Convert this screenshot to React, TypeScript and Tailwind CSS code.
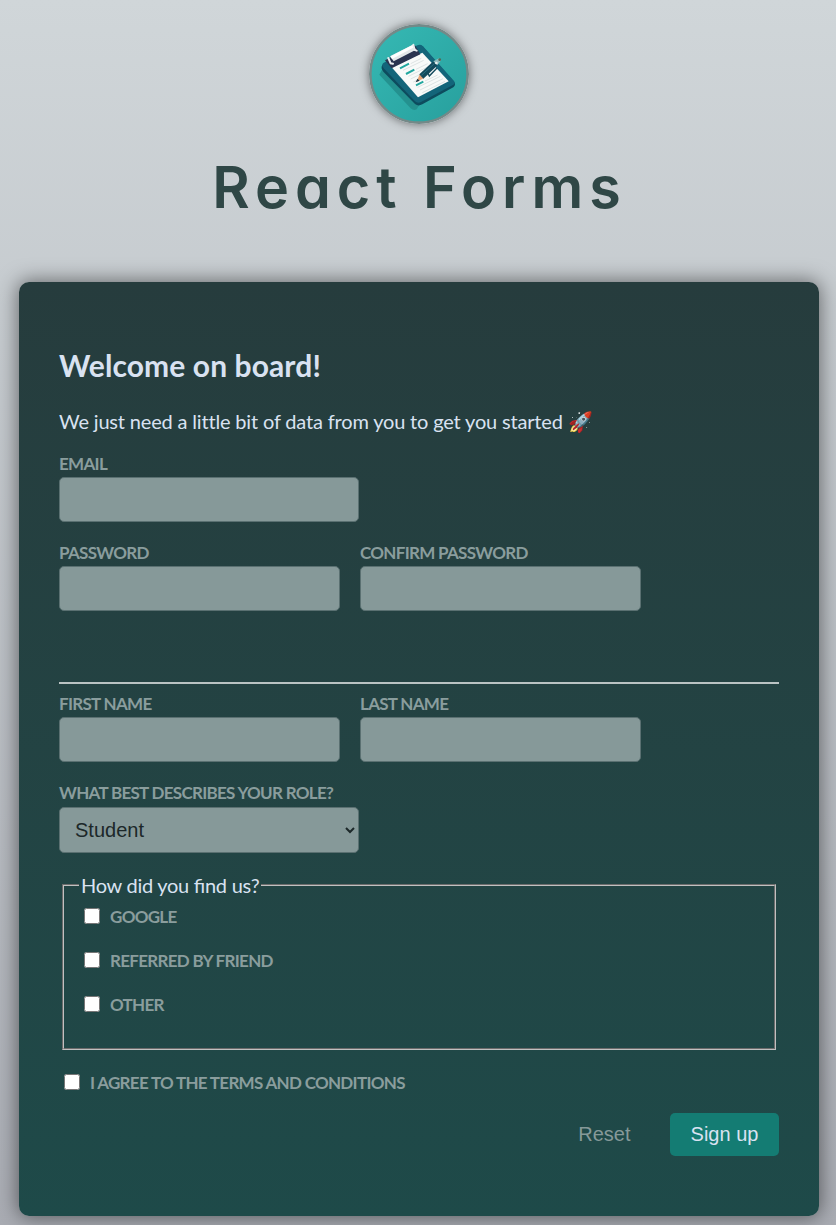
import type { ReactNode } from 'react';

const control =
  'block w-full rounded-[5px] border border-[#5a7071] bg-[#869999] text-[#1c2829]';

function Logo() {
  return (
    <svg viewBox="27 30 300 300" className="size-[100px] rounded-full shadow-[0_0_10px_rgba(0,0,0,0.5)]">
      <defs>
        <linearGradient id="disc" x1="0" y1="0" x2="1" y2="1">
          <stop offset="0" stopColor="#36b9b4" />
          <stop offset="1" stopColor="#279f9d" />
        </linearGradient>
      </defs>
      <circle cx="177" cy="180" r="146" fill="url(#disc)" stroke="#748988" strokeWidth="8" />
      <path d="M58 182 L70 160 L185 262 L170 286 Q161 291 152 283 Z" fill="#24918f" />
      <path
        d="M67 153 L172 97 Q181 91 189 98 L282 203 Q289 212 280 220 L187 271 Q175 278 165 270 L70 173 Q61 162 67 153Z"
        fill="#0d4c5e"
      />
      <path
        d="M70 147 L172 94 Q181 90 189 97 L282 201 Q287 207 280 212 L183 264 Q173 269 165 262 L71 163 Q63 153 70 147Z"
        fill="#13657a"
      />
      <path d="M95 160 L187 116 L266 202 L174 250Z" fill="#f8faf9" />
      <path d="M75 139 L165 94 L181 121 L95 163Z" fill="#2b3450" />
      <path d="M90 127 L158 92 L168 107 L101 142Z" fill="#e4e8ea" />
      <path d="M92 127 L158 93 L162 100 L96 135Z" fill="#fff" />
      <path d="M85 132 L92 148 L99 149 M160 92 L164 108 L170 110" fill="none" stroke="#e9ecee" strokeWidth="6" strokeLinecap="round" />
      <path d="M120 163 L147 149 M138 180 L163 167 M168 214 L190 203" stroke="#22a79f" strokeWidth="6" />
      <path
        d="M152 149 L184 133 M129 169 L191 139 M168 166 L203 149 M145 187 L207 157 M152 195 L212 166 M160 204 L220 175 M195 201 L233 183 M173 220 L241 187 M180 228 L249 194 M187 236 L255 202"
        stroke="#dde3e3"
        strokeWidth="3"
      />
      <path d="M169 204 L180 179 L193 192Z" fill="#e9a577" />
      <path d="M167 205 L172 194 L179 200Z" fill="#203443" />
      <path d="M178 181 L220 142 L233 154 L190 194Z" fill="#144a5c" />
      <path d="M220 142 L237 133 L243 139 L232 154Z" fill="#8fbabd" />
      <path d="M184 184 L224 148" stroke="#286e80" strokeWidth="3" />
      <path d="M202 174 L208 186 L231 162" fill="none" stroke="#144a5c" strokeWidth="4" />
      <circle cx="229" cy="147" r="4" fill="#e9efee" />
      <circle cx="239" cy="137" r="4" fill="#526552" />
    </svg>
  );
}

function Label({ children, htmlFor }: { children: ReactNode; htmlFor: string }) {
  return (
    <label
      htmlFor={htmlFor}
      className="block h-[20px] text-[17px] leading-[22px] font-bold tracking-[-0.7px] whitespace-nowrap text-[#8a9d9d] uppercase"
    >
      {children}
    </label>
  );
}

function Field({ id, label, type = 'text', className }: { id: string; label: string; type?: string; className: string }) {
  return (
    <div className={className}>
      <Label htmlFor={id}>{label}</Label>
      <input id={id} type={type} className={`${control} mt-[4px] h-[45px] px-4 text-[20px]`} />
    </div>
  );
}

function Check({ id, label }: { id: string; label: string }) {
  return (
    <div className="flex h-5 items-center gap-[10px]">
      <input id={id} type="checkbox" className="size-4" />
      <Label htmlFor={id}>{label}</Label>
    </div>
  );
}

export default function App() {
  return (
    <div className="h-[1225px] overflow-hidden bg-linear-to-b from-[#d0d6d9] to-[#a9acb3] pr-[17px] pl-[19px] font-['Lato',sans-serif] text-[#d9e2f1]">
      <header className="flex h-[282px] flex-col items-center pt-[24px]">
        <Logo />
        <h1 className="mt-[27px] pl-[1px] font-['Inter',sans-serif] text-[57.5px] leading-[72px] font-semibold tracking-[6px] whitespace-nowrap text-[#2f4746] [font-feature-settings:'cv11'_1]">
          React Forms
        </h1>
      </header>

      <form
        onSubmit={(e) => e.preventDefault()}
        className="h-[934px] rounded-[10px] bg-linear-to-b from-[#263c3d] to-[#1e4a49] px-[40px] pt-[63px] shadow-[0_0_20px_1px_rgba(0,0,0,0.5)]"
      >
        <h2 className="text-[30px] leading-[40px] font-bold tracking-[0.1px]">Welcome on board!</h2>
        <p className="mt-[22px] text-[20px] leading-[28px] tracking-[-0.17px]">
          We just need a little bit of data from you to get you started 🚀
        </p>

        <Field id="email" label="Email" type="email" className="mt-[18px] w-[300px]" />
        <div className="mt-[20px] flex gap-[20px]">
          <Field id="password" label="Password" type="password" className="w-[281px]" />
          <Field id="confirm-password" label="Confirm Password" type="password" className="w-[281px]" />
        </div>

        <hr className="mt-[71px] border-t-2 border-[#bac3c3]" />

        <div className="mt-[9px] flex gap-[20px]">
          <Field id="first-name" label="First Name" className="w-[281px]" />
          <Field id="last-name" label="Last Name" className="w-[281px]" />
        </div>

        <div className="mt-[20px] w-[300px]">
          <Label htmlFor="role">What best describes your role?</Label>
          <select
            id="role"
            className={`${control} mt-[5px] h-[46px] pl-[11px] font-['Liberation_Sans',sans-serif] text-[20px]`}
          >
            <option>Student</option>
            <option>Teacher</option>
            <option>Employee</option>
            <option>Founder</option>
            <option>Other</option>
          </select>
        </div>

        <fieldset className="mx-[3px] mt-[19px] h-[178px] border-2 border-[#c0c0c0] [border-style:groove] px-[15px]">
          <legend className="px-[2px] text-[20px] leading-[26px] tracking-[-0.27px] [font-feature-settings:'liga'_1]">
            How did you find us?
          </legend>
          <div className="flex flex-col gap-[24px] pt-[8px] pl-[5px]">
            <Check id="google" label="Google" />
            <Check id="friend" label="Referred by friend" />
            <Check id="other" label="Other" />
          </div>
        </fieldset>

        <div className="mt-[22px] pl-[5px]">
          <Check id="terms" label="I agree to the terms and conditions" />
        </div>

        <div className="mt-[21px] flex justify-end gap-[20px] font-['Liberation_Sans',sans-serif] text-[20px]">
          <button type="reset" className="h-[43px] px-[19.5px] pb-[2px] text-[#869999]">
            Reset
          </button>
          <button type="submit" className="h-[43px] w-[109px] rounded-[5px] bg-[#147c73] pb-[2px] text-[#d9e2f1]">
            Sign up
          </button>
        </div>
      </form>
    </div>
  );
}
